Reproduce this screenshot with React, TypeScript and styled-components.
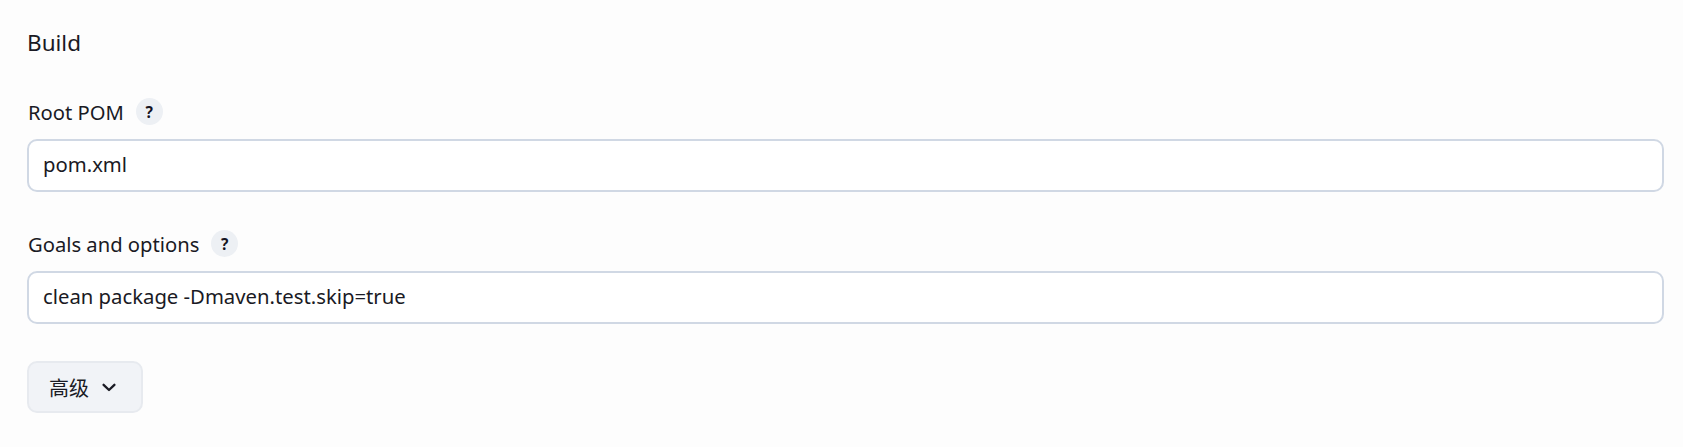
import React from "react";
import styled, { createGlobalStyle } from "styled-components";

const GlobalStyle = createGlobalStyle`
  html, body {
    margin: 0;
    padding: 0;
    background: #fdfdfd;
  }
  body {
    font-family: "Noto Sans", "Noto Sans CJK SC", sans-serif;
    color: #1a1a24;
  }
`;

const Page = styled.div`
  display: flex;
  flex-direction: column;
  padding: 28px 19px 34px 27px;
`;

const SectionTitle = styled.h2`
  margin: 0;
  font-size: 22.5px;
  line-height: 30px;
  font-weight: 400;
`;

const Field = styled.div<{ $top: number }>`
  display: flex;
  flex-direction: column;
  gap: 14px;
  margin-top: ${(p) => p.$top}px;
`;

const LabelRow = styled.div`
  display: flex;
  align-items: center;
  gap: 12px;
  height: 27px;
`;

const Label = styled.label`
  font-size: 20.2px;
  line-height: 27px;
  padding-left: 1px;
  padding-top: 1px;
`;

const HelpButton = styled.span`
  display: inline-flex;
  align-items: center;
  justify-content: center;
  width: 27px;
  height: 27px;
  border-radius: 50%;
  background: #edf0f4;
  font-size: 15.5px;
  font-weight: 700;
  color: #14141f;
`;

const TextInput = styled.input`
  box-sizing: border-box;
  width: 100%;
  height: 53px;
  border: 2px solid #d0d8e4;
  border-radius: 10px;
  background: #ffffff;
  padding: 0 14px 3px;
  font-family: "Noto Sans", sans-serif;
  font-size: 20.3px;
  color: #1a1a24;
  outline: none;
`;

const AdvancedButton = styled.button`
  align-self: flex-start;
  box-sizing: border-box;
  display: inline-flex;
  align-items: center;
  gap: 13px;
  height: 52px;
  margin-top: 37px;
  padding: 0 25px 0 20px;
  border: 2px solid #e7eaef;
  border-radius: 10px;
  background: #f1f3f7;
  font-family: "Noto Sans CJK SC", "Noto Sans", sans-serif;
  font-size: 20px;
  color: #1a1a24;
  cursor: pointer;
`;

const Chevron = () => (
  <svg width="14" height="9" viewBox="0 0 14 9" fill="none">
    <path
      d="M1.6 1.8 L7 7 L12.4 1.8"
      stroke="#1a1a24"
      strokeWidth="2.3"
      strokeLinecap="round"
      strokeLinejoin="round"
    />
  </svg>
);

export default function App() {
  return (
    <>
      <GlobalStyle />
      <Page>
        <SectionTitle>Build</SectionTitle>
        <Field $top={40}>
          <LabelRow>
            <Label>Root POM</Label>
            <HelpButton>?</HelpButton>
          </LabelRow>
          <TextInput defaultValue="pom.xml" />
        </Field>
        <Field $top={38}>
          <LabelRow>
            <Label>Goals and options</Label>
            <HelpButton>?</HelpButton>
          </LabelRow>
          <TextInput defaultValue="clean package -Dmaven.test.skip=true" />
        </Field>
        <AdvancedButton type="button">
          高级
          <Chevron />
        </AdvancedButton>
      </Page>
    </>
  );
}
